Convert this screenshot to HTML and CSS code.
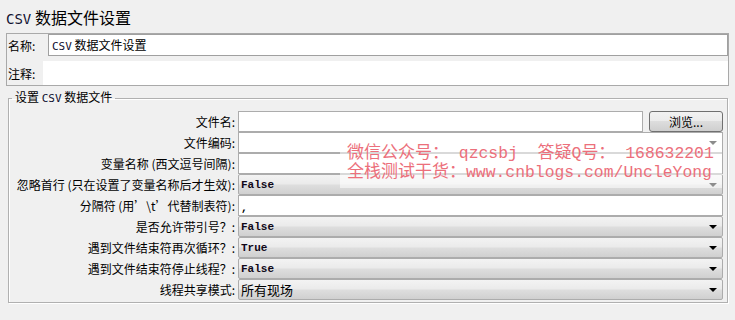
FILE: index.html
```html
<!DOCTYPE html>
<html lang="zh-CN">
<head>
    <meta charset="UTF-8">
    <title>CSV 数据文件设置</title>
    <link rel="stylesheet" href="styles.css">
</head>
<body>
    <div class="page">
        <h1 class="titulo"><span class="mono-title">CSV</span> 数据文件设置</h1>

        <div class="meta">
            <div class="meta-row">
                <span class="meta-label label-name">名称:</span>
                <div class="meta-name"><span class="mono-sm">CSV</span> 数据文件设置</div>
            </div>
            <div class="meta-row">
                <span class="meta-label label-comment">注释:</span>
                <div class="meta-comment"></div>
            </div>
        </div>

        <fieldset class="csv-box">
            <legend class="csv-legend">设置 <span class="mono-sm">CSV</span> 数据文件</legend>
            <div class="form-grid">
                <span class="field-label">文件名:</span>
                <div class="file-row">
                    <div class="text-field grow"></div>
                    <button class="browse">浏览...</button>
                </div>

                <span class="field-label">文件编码:</span>
                <div class="text-field combo-edit"><span></span><span class="arrow"></span></div>

                <span class="field-label">变量名称 (西文逗号间隔):</span>
                <div class="text-field"></div>

                <span class="field-label">忽略首行 (只在设置了变量名称后才生效):</span>
                <div class="combo"><span class="combo-value">False</span><span class="arrow"></span></div>

                <span class="field-label">分隔符 (用’\t’代替制表符):</span>
                <div class="text-field"><span class="field-value">,</span></div>

                <span class="field-label">是否允许带引号？:</span>
                <div class="combo"><span class="combo-value">False</span><span class="arrow"></span></div>

                <span class="field-label">遇到文件结束符再次循环？:</span>
                <div class="combo"><span class="combo-value">True</span><span class="arrow"></span></div>

                <span class="field-label">遇到文件结束符停止线程？:</span>
                <div class="combo"><span class="combo-value">False</span><span class="arrow"></span></div>

                <span class="field-label">线程共享模式:</span>
                <div class="combo"><span class="combo-text">所有现场</span><span class="arrow"></span></div>
            </div>
        </fieldset>

        <!-- marca de agua encima del formulario -->
        <div class="watermark">
            <div class="wm-line">微信公众号：<span class="wm-latin"> qzcsbj  </span>答疑<span class="wm-latin">Q</span>号：<span class="wm-latin"> 168632201</span></div>
            <div class="wm-line">全栈测试干货：<span class="wm-latin">www.cnblogs.com/UncleYong</span></div>
        </div>
    </div>
</body>
</html>
```

FILE: styles.css
```css
body {
    margin: 0;
    background: #f0f0f0;
    font-family: "Noto Sans CJK SC", sans-serif;
    font-size: 12px;
    color: #000;
}

.page {
    position: relative;
    width: 735px;
    height: 320px;
}

.titulo {
    margin: 0;
    height: 33px;
    line-height: 34px;
    padding-left: 6px;
    font-size: 16px;
    font-weight: normal;
}

.mono-title {
    font-family: "DejaVu Sans Mono", monospace;
    font-size: 14px;
    color: #101030;
}

.mono-sm {
    font-family: "DejaVu Sans Mono", monospace;
    font-size: 11px;
    color: #101030;
}

/* Panel nombre / comentario */
.meta {
    box-sizing: border-box;
    width: 723px;
    margin-left: 6px;
    border: 1px solid #a9a9a9;
    display: flex;
    flex-direction: column;
    gap: 5px;
}

.meta-row {
    display: flex;
    align-items: center;
}

.meta-label {
    box-sizing: border-box;
    padding-left: 1px;
    white-space: nowrap;
}

.label-name {
    width: 41px;
}

.label-comment {
    width: 36px;
}

.meta-name {
    flex: 1;
    box-sizing: border-box;
    height: 22px;
    line-height: 20px;
    padding-left: 3px;
    border: 1px solid #a0a0a0;
    background: #fff;
}

.meta-comment {
    flex: 1;
    height: 24px;
    background: #fff;
}

/* Grupo CSV */
.csv-box {
    box-sizing: border-box;
    width: 720px;
    margin: 3px 0 0 8px;
    padding: 4px 4px 2px 0;
    border: 1px solid #b0b0b0;
    box-shadow: inset 1px 1px 0 #fff, 1px 1px 0 #fff;
}

.csv-legend {
    margin-left: 3px;
    padding: 0 3px;
    line-height: 16px;
}

.form-grid {
    display: grid;
    grid-template-columns: 228px 1fr;
    grid-auto-rows: 21px;
    column-gap: 1px;
}

.field-label {
    text-align: right;
    padding-right: 2px;
    line-height: 21px;
    white-space: nowrap;
}

.file-row {
    display: flex;
    gap: 6px;
}

.grow {
    flex: 1;
}

.text-field {
    box-sizing: border-box;
    height: 21px;
    border: 1px solid #acacac;
    background: #fff;
    padding-left: 2px;
    line-height: 19px;
}

.field-value {
    font-family: "Liberation Mono", monospace;
    font-size: 11px;
    font-weight: bold;
}

.combo-edit {
    display: flex;
    align-items: center;
    justify-content: space-between;
    padding-right: 5px;
}

.combo {
    box-sizing: border-box;
    height: 21px;
    display: flex;
    align-items: center;
    justify-content: space-between;
    padding: 0 5px 0 2px;
    border: 1px solid #acacac;
    border-radius: 2px;
    background: linear-gradient(#f3f3f3, #ebebeb 45%, #dddddd 55%, #d0d0d0);
}

.combo-value {
    font-family: "Liberation Mono", monospace;
    font-size: 11px;
    font-weight: bold;
    color: #100818;
}

.combo-text {
    font-size: 13px;
}

.arrow {
    width: 0;
    height: 0;
    border-left: 4px solid transparent;
    border-right: 4px solid transparent;
    border-top: 4px solid #000;
}

.browse {
    box-sizing: border-box;
    width: 74px;
    height: 21px;
    padding: 0;
    border: 1px solid #707070;
    border-radius: 3px;
    background: linear-gradient(#f2f2f2, #ebebeb 50%, #dddddd 50%, #cfcfcf);
    font-family: "Noto Sans CJK SC", sans-serif;
    font-size: 12px;
    color: #000;
}

.watermark {
    position: absolute;
    left: 340px;
    top: 139px;
    box-sizing: border-box;
    width: 382px;
    height: 49px;
    padding: 2px 0 0 7px;
    background: rgba(255, 255, 255, 0.55);
    color: #ec6f7b;
    font-family: "Noto Sans CJK SC", sans-serif;
    font-size: 17px;
    line-height: 19px;
}

.wm-line {
    white-space: pre;
    height: 19px;
}

.wm-latin {
    font-family: "Liberation Mono", monospace;
    font-size: 16.4px;
}
```
